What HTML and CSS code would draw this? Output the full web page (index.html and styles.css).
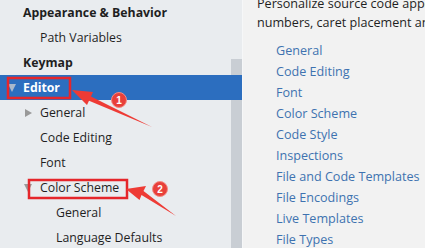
FILE: index.html
```html
<!DOCTYPE html>
<html lang="en">
<head>
    <meta charset="UTF-8">
    <title>Settings - Editor</title>
    <link rel="stylesheet" href="styles.css">
</head>
<body>
    <div class="window">
        <aside class="tree">
            <div class="row level0"><span class="toggle"></span>Appearance &amp; Behavior</div>
            <div class="row level1"><span class="toggle"></span>Path Variables</div>
            <div class="row level0"><span class="toggle"></span>Keymap</div>
            <div class="row level0 selected"><span class="toggle open"></span>Editor</div>
            <div class="row level1"><span class="toggle closed"></span>General</div>
            <div class="row level1"><span class="toggle"></span>Code Editing</div>
            <div class="row level1"><span class="toggle"></span>Font</div>
            <div class="row level1"><span class="toggle open"></span>Color Scheme</div>
            <div class="row level2"><span class="toggle"></span>General</div>
            <div class="row level2"><span class="toggle"></span>Language Defaults</div>
        </aside>

        <main class="panel">
            <p class="desc">Personalize source code appearance by fonts, colors, line<br>numbers, caret placement and other editor options.</p>
            <ul class="links">
                <li>General</li>
                <li>Code Editing</li>
                <li>Font</li>
                <li>Color Scheme</li>
                <li>Code Style</li>
                <li>Inspections</li>
                <li>File and Code Templates</li>
                <li>File Encodings</li>
                <li>Live Templates</li>
                <li>File Types</li>
            </ul>
        </main>

        <div class="edge"></div>

        <!-- annotation layer -->
        <svg class="marks" width="425" height="248" viewBox="0 0 425 248">
            <rect x="8" y="78" width="62" height="20" fill="none" stroke="#e5262b" stroke-width="2.5"/>
            <rect x="29" y="180" width="98" height="18" fill="none" stroke="#e5262b" stroke-width="2.5"/>
            <polygon points="72,90 93,92 91,96.5 152,127 89,100.7 87,105" fill="#ee3b35"/>
            <polygon points="126,189 146,186 143.5,191 176,216 141.5,195 139.5,200" fill="#ee3b35"/>
            <circle cx="119" cy="100" r="7.5" fill="#e8403a" stroke="#f48a84" stroke-width="1"/>
            <text x="119" y="104" class="badge">1</text>
            <circle cx="160" cy="189" r="7.5" fill="#e8403a" stroke="#f48a84" stroke-width="1"/>
            <text x="160" y="193" class="badge">2</text>
        </svg>
    </div>
</body>
</html>
```

FILE: styles.css
```css
body {
    margin: 0;
    font-family: "Open Sans", "Noto Sans", sans-serif;
    font-size: 12.3px;
    color: #1f1f1f;
    overflow: hidden;
}

.window {
    position: relative;
    display: flex;
    width: 425px;
    height: 248px;
    background: #ffffff;
}

.tree {
    width: 242px;
    flex: none;
    background: #e9ecef linear-gradient(#c9ced4, #c9ced4) no-repeat 231px 59px / 11px 189px;
    border-right: 1px solid #f6f7f8;
}

.row {
    display: flex;
    align-items: center;
    height: 25px;
    white-space: nowrap;
}

.level0 {
    padding-left: 8px;
    font-weight: bold;
}

.level1 {
    padding-left: 24px;
}

.level2 {
    padding-left: 40px;
}

.toggle {
    width: 16px;
    flex: none;
    display: flex;
    align-items: center;
}

.level0 .toggle {
    width: 15px;
}

.toggle.open::before {
    content: "";
    border-left: 4.5px solid transparent;
    border-right: 4.5px solid transparent;
    border-top: 8px solid #9a9a9a;
}

.toggle.closed::before {
    content: "";
    margin-left: 1px;
    border-top: 4px solid transparent;
    border-bottom: 4px solid transparent;
    border-left: 7px solid #999999;
}

.row.selected {
    background: #2c6ebf;
    color: #ffffff;
}

.row.selected .toggle.open::before {
    border-top-color: #a9b8cc;
}

.panel {
    width: 178px;
    flex: none;
    background: #f2f2f2;
    padding-left: 14px;
    overflow: hidden;
    font-size: 12.6px;
}

.desc {
    margin: -6px 0 0;
    line-height: 19px;
    white-space: nowrap;
    color: #1f1f1f;
}

.links {
    list-style: none;
    margin: 8px 0 0;
    padding-left: 19px;
    white-space: nowrap;
}

.links li {
    height: 21px;
    line-height: 21px;
    color: #3e72b0;
}

.edge {
    flex: 1;
    background: #ffffff;
}

.marks {
    position: absolute;
    left: 0;
    top: 0;
}

.badge {
    fill: #ffffff;
    font-family: "Liberation Sans", sans-serif;
    font-size: 10px;
    font-weight: bold;
    text-anchor: middle;
}
```
